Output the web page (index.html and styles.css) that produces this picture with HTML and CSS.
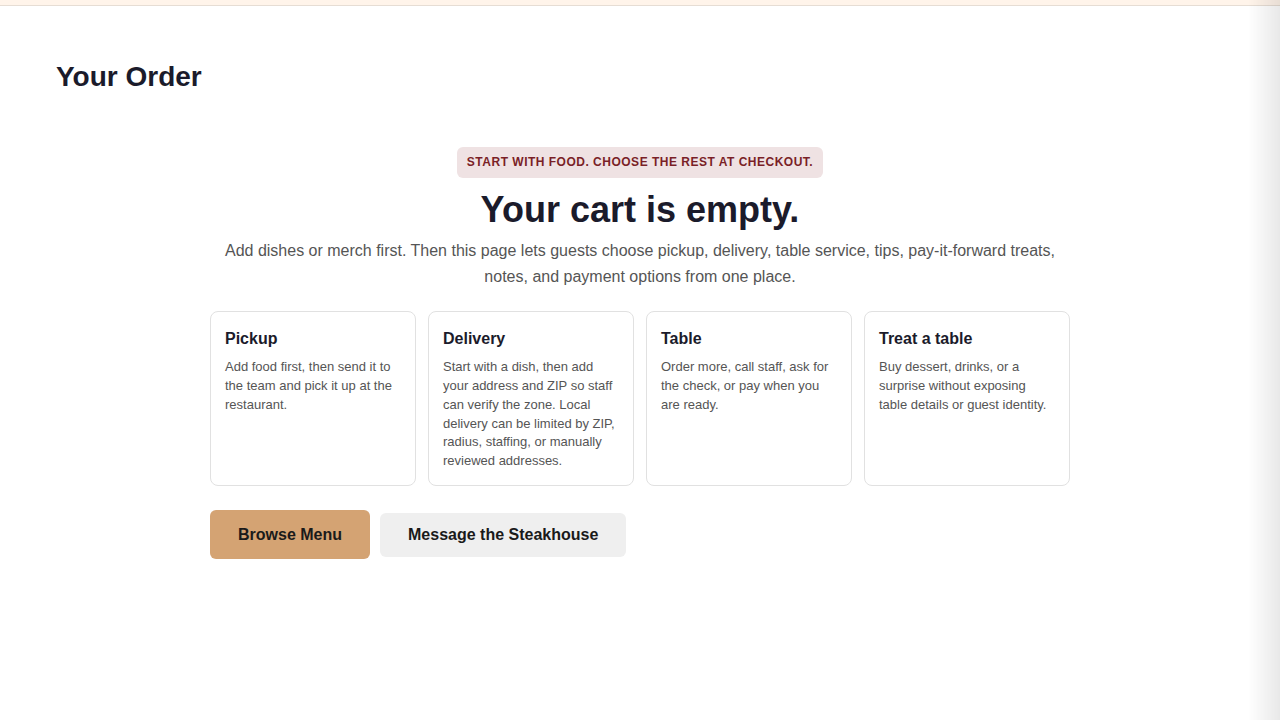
FILE: index.html
```html
<!DOCTYPE html>
<html lang="en">
<head>
<meta charset="utf-8">
<title>Your Order</title>
<link rel="stylesheet" href="styles.css">
</head>
<body>
<div class="topbar"></div>
<main class="page">
  <h1 class="page-title">Your Order</h1>
  <section class="empty">
    <div class="badge">Start with food. Choose the rest at checkout.</div>
    <h2 class="empty-title">Your cart is empty.</h2>
    <p class="empty-text">Add dishes or merch first. Then this page lets guests choose pickup, delivery, table service, tips, pay-it-forward treats, notes, and payment options from one place.</p>
    <div class="cards">
      <div class="card">
        <h3 class="card-title">Pickup</h3>
        <p class="card-text">Add food first, then send it to the team and pick it up at the restaurant.</p>
      </div>
      <div class="card">
        <h3 class="card-title">Delivery</h3>
        <p class="card-text">Start with a dish, then add your address and ZIP so staff can verify the zone. Local delivery can be limited by ZIP, radius, staffing, or manually reviewed addresses.</p>
      </div>
      <div class="card">
        <h3 class="card-title">Table</h3>
        <p class="card-text">Order more, call staff, ask for the check, or pay when you are ready.</p>
      </div>
      <div class="card">
        <h3 class="card-title">Treat a table</h3>
        <p class="card-text">Buy dessert, drinks, or a surprise without exposing table details or guest identity.</p>
      </div>
    </div>
    <div class="actions">
      <button class="btn btn-primary">Browse Menu</button>
      <button class="btn btn-secondary">Message the Steakhouse</button>
    </div>
  </section>
</main>
<div class="edge-shadow"></div>
</body>
</html>
```
FILE: styles.css
```css
* { box-sizing: border-box; }
html, body { margin: 0; padding: 0; background: #ffffff; }
body {
  font-family: "Liberation Sans", Arial, sans-serif;
  color: #1b1b2b;
  min-height: 720px;
}
.topbar {
  height: 6px;
  background: #fff4ea;
  border-bottom: 1px solid #e6ddd4;
}
.page {
  padding: 54px 56px 40px;
}
.page-title {
  margin: 0;
  font-size: 28px;
  line-height: 34px;
  font-weight: 700;
  color: #1b1b2b;
}
.empty {
  width: 860px;
  margin: 53px auto 0;
  display: flex;
  flex-direction: column;
  align-items: center;
}
.badge {
  background: #efe2e3;
  color: #7a1f27;
  font-size: 12px;
  line-height: 15px;
  font-weight: 700;
  text-transform: uppercase;
  letter-spacing: 0.5px;
  padding: 8px 10px;
  border-radius: 6px;
}
.empty-title {
  margin: 10px 0 0;
  font-size: 36px;
  line-height: 44px;
  font-weight: 700;
  color: #1b1b2b;
}
.empty-text {
  margin: 6px 0 0;
  font-size: 16px;
  line-height: 26px;
  color: #555555;
  text-align: center;
}
.cards {
  margin-top: 21px;
  width: 100%;
  display: grid;
  grid-template-columns: repeat(4, 1fr);
  gap: 12px;
}
.card {
  border: 1px solid #e1e1e1;
  border-radius: 8px;
  padding: 17px 14px 14px;
  background: #fff;
}
.card-title {
  margin: 0 0 9px;
  font-size: 16px;
  line-height: 20px;
  font-weight: 700;
  color: #1b1b2b;
}
.card-text {
  margin: 0;
  font-size: 13px;
  line-height: 1.45;
  color: #555555;
}
.actions {
  margin-top: 24px;
  width: 100%;
  display: flex;
  align-items: center;
  gap: 10px;
}
.btn {
  font-family: "Liberation Sans", Arial, sans-serif;
  font-size: 16px;
  font-weight: 700;
  line-height: 19px;
  border: none;
  border-radius: 6px;
  color: #1a1a1a;
  cursor: pointer;
}
.btn-primary {
  background: #d4a373;
  padding: 15px 28px;
}
.btn-secondary {
  background: #efefef;
  padding: 12px 28px 13px;
}
.edge-shadow {
  position: fixed;
  top: 0;
  right: 0;
  width: 32px;
  height: 100%;
  background: linear-gradient(to right, rgba(0,0,0,0), rgba(0,0,0,0.09));
  pointer-events: none;
}
```
